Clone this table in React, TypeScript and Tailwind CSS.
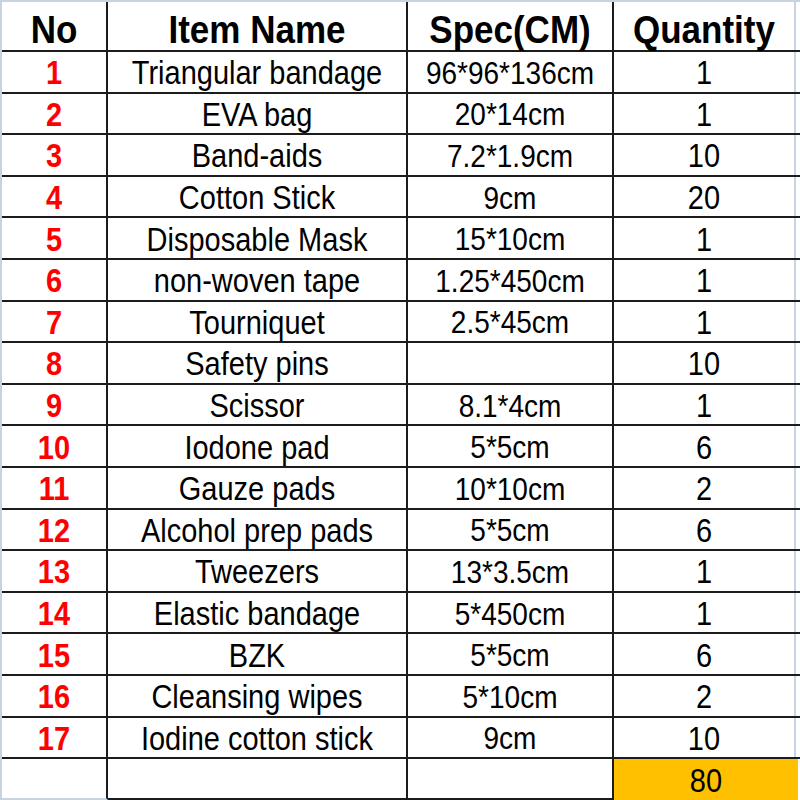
import React from "react";

const rows: [string, string, string, string][] = [
  ["1", "Triangular bandage", "96*96*136cm", "1"],
  ["2", "EVA bag", "20*14cm", "1"],
  ["3", "Band-aids", "7.2*1.9cm", "10"],
  ["4", "Cotton Stick", "9cm", "20"],
  ["5", "Disposable Mask", "15*10cm", "1"],
  ["6", "non-woven tape", "1.25*450cm", "1"],
  ["7", "Tourniquet", "2.5*45cm", "1"],
  ["8", "Safety pins", "", "10"],
  ["9", "Scissor", "8.1*4cm", "1"],
  ["10", "Iodone pad", "5*5cm", "6"],
  ["11", "Gauze pads", "10*10cm", "2"],
  ["12", "Alcohol prep pads", "5*5cm", "6"],
  ["13", "Tweezers", "13*3.5cm", "1"],
  ["14", "Elastic bandage", "5*450cm", "1"],
  ["15", "BZK", "5*5cm", "6"],
  ["16", "Cleansing wipes", "5*10cm", "2"],
  ["17", "Iodine cotton stick", "9cm", "10"],
];

const T = ({ children }: { children: React.ReactNode }) => (
  <span className="inline-block scale-y-[1.12] translate-y-[2px]">{children}</span>
);

export default function App() {
  return (
    <div className="w-[800px] h-[800px] bg-white flex flex-col border-t-2 border-l-2 border-[#c8d3e2] font-['Liberation_Sans',Arial,sans-serif] text-black overflow-hidden">
      <div className="flex h-[50px] border-b-2 border-[#1c1c1c] text-[35px] font-bold leading-none">
        <div className="w-[106px] border-r-2 border-[#1c1c1c] flex items-center justify-center"><T>No</T></div>
        <div className="w-[300px] border-r-2 border-[#1c1c1c] flex items-center justify-center"><T>Item Name</T></div>
        <div className="w-[206px] border-r-2 border-[#1c1c1c] flex items-center justify-center"><T>Spec(CM)</T></div>
        <div className="w-[182px] border-r-2 border-[#c8d3e2] flex items-center justify-center"><T>Quantity</T></div>
      </div>
      {rows.map((r) => (
        <div key={r[0]} className="flex h-[41.6px] border-b-2 border-[#1c1c1c] text-[29px] leading-none">
          <div className="w-[106px] border-r-2 border-[#1c1c1c] flex items-center justify-center font-bold text-[#ff0000]"><T>{r[0]}</T></div>
          <div className="w-[300px] border-r-2 border-[#1c1c1c] flex items-center justify-center"><T>{r[1]}</T></div>
          <div className="w-[206px] border-r-2 border-[#1c1c1c] flex items-center justify-center text-[28px]"><T>{r[2]}</T></div>
          <div className="w-[182px] border-r-2 border-[#c8d3e2] flex items-center justify-center"><T>{r[3]}</T></div>
        </div>
      ))}
      <div className="flex flex-1 text-[29px] leading-none">
        <div className="w-[106px] border-r-2 border-[#1c1c1c] border-b-2 border-b-[#c8d3e2]"></div>
        <div className="w-[300px] border-r-2 border-b-2 border-[#1c1c1c]"></div>
        <div className="w-[206px] border-r-2 border-b-2 border-[#1c1c1c]"></div>
        <div className="w-[184px] bg-[#ffc000] flex items-center justify-center"><T>80</T></div>
      </div>
    </div>
  );
}
